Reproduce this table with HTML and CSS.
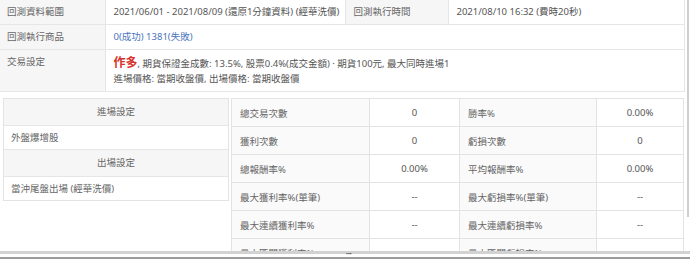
FILE: index.html
```html
<!DOCTYPE html>
<html lang="zh-Hant">
<head>
<meta charset="utf-8">
<link rel="stylesheet" href="styles.css">
</head>
<body>
<div class="viewport">
  <div class="scroll">
    <table class="info">
      <colgroup><col class="c1"><col class="c2"><col class="c3"><col class="c4"></colgroup>
      <tr class="r1">
        <td class="lbl">回測資料範圍</td>
        <td class="val">2021/06/01 - 2021/08/09 (還原1分鐘資料) (經華洗價)</td>
        <td class="lbl">回測執行時間</td>
        <td class="val">2021/08/10 16:32 (費時20秒)</td>
      </tr>
      <tr class="r2">
        <td class="lbl">回測執行商品</td>
        <td class="val link" colspan="3">0(成功) 1381(失敗)</td>
      </tr>
      <tr class="r3">
        <td class="lbl top">交易設定</td>
        <td class="val multi" colspan="3"><span class="dir">作多</span>, 期貨保證金成數: 13.5%, 股票0.4%(成交金額) · 期貨100元, 最大同時進場1<br>進場價格: 當期收盤價, 出場價格: 當期收盤價</td>
      </tr>
    </table>
    <div class="lower">
      <div class="settings">
        <div class="head">進場設定</div>
        <div class="item">外盤爆增股</div>
        <div class="head">出場設定</div>
        <div class="item">當沖尾盤出場 (經華洗價)</div>
      </div>
      <table class="stats">
        <colgroup><col class="s1"><col class="s2"><col class="s3"><col class="s4"></colgroup>
        <tr><td class="sl">總交易次數</td><td class="sv">0</td><td class="sl">勝率%</td><td class="sv">0.00%</td></tr>
        <tr><td class="sl">獲利次數</td><td class="sv">0</td><td class="sl">虧損次數</td><td class="sv">0</td></tr>
        <tr><td class="sl">總報酬率%</td><td class="sv">0.00%</td><td class="sl">平均報酬率%</td><td class="sv">0.00%</td></tr>
        <tr><td class="sl">最大獲利率%(單筆)</td><td class="sv">--</td><td class="sl">最大虧損率%(單筆)</td><td class="sv">--</td></tr>
        <tr><td class="sl">最大連續獲利率%</td><td class="sv">--</td><td class="sl">最大連續虧損率%</td><td class="sv">--</td></tr>
        <tr><td class="sl">最大區間獲利率%</td><td class="sv">--</td><td class="sl">最大區間虧損率%</td><td class="sv">--</td></tr>
      </table>
    </div>
  </div>
  <div class="thumb"></div>
</div>
<div class="grip"><span class="dots">•••</span></div>
</body>
</html>
```

FILE: styles.css
```css
html, body {
  margin: 0;
  padding: 0;
  background: #fff;
}
body {
  font-family: "Noto Sans", "Noto Sans CJK TC", sans-serif;
  font-size: 9.5px;
  color: #555;
  width: 690px;
}
.viewport {
  position: relative;
  height: 251px;
  overflow: hidden;
}
.scroll {
  width: 684px;
}
table {
  border-collapse: collapse;
  table-layout: fixed;
}
.info {
  width: 684px;
}
.info .c1 { width: 105px; }
.info .c2 { width: 240px; }
.info .c3 { width: 103px; }
.info .c4 { width: 236px; }
.info td {
  border: 1px solid #e6e6e6;
  padding: 0 8px;
  white-space: nowrap;
  line-height: 14px;
}
.info tr:first-child td { border-top: none; }
.info td:first-child { border-left: none; padding-left: 7px; }
.info .r1 td, .info .r2 td { height: 24px; }
.info .r3 td { height: 36px; }
.lbl {
  background: #f6f6f6;
  color: #666;
}
.lbl.top { vertical-align: top; padding-top: 5px; }
.val { color: #555; }
.val.link { color: #4a74c0; }
.val.multi { line-height: 15px; }
.dir {
  color: #d8312a;
  font-weight: bold;
  font-size: 12px;
  line-height: 14px;
}
.lower {
  display: flex;
  gap: 2px;
  margin-top: 6px;
  margin-left: 3px;
  align-items: flex-start;
}
.settings {
  width: 227px;
  border: 1px solid #e3e3e3;
  box-sizing: border-box;
}
.settings .head {
  height: 26px;
  line-height: 26px;
  text-align: center;
  background: #f6f6f6;
  color: #666;
  border-bottom: 1px solid #e6e6e6;
}
.settings .item {
  height: 23px;
  line-height: 23px;
  padding-left: 7px;
  color: #666;
  border-bottom: 1px solid #e6e6e6;
}
.settings .item:last-child { border-bottom: none; }
.stats {
  width: 452px;
}
.stats .s1 { width: 138px; }
.stats .s2 { width: 90px; }
.stats .s3 { width: 137px; }
.stats .s4 { width: 87px; }
.stats td {
  border: 1px solid #e3e3e3;
  height: 27px;
  padding: 0;
  white-space: nowrap;
}
.stats .sl {
  padding-left: 8px;
  color: #666;
  background: #fafafa;
}
.stats .sv {
  text-align: center;
  color: #555;
}
.thumb {
  position: absolute;
  right: 1px;
  top: 0;
  width: 2px;
  height: 217px;
  background: #cfcfcf;
}
.grip {
  border-top: 3px solid #d2d2d2;
  border-bottom: 2px solid #9b9b9b;
  position: relative;
  height: 3px;
}
.dots {
  position: absolute;
  left: 346px;
  top: -4px;
  font-size: 5px;
  color: #333;
  line-height: 8px;
}
```
